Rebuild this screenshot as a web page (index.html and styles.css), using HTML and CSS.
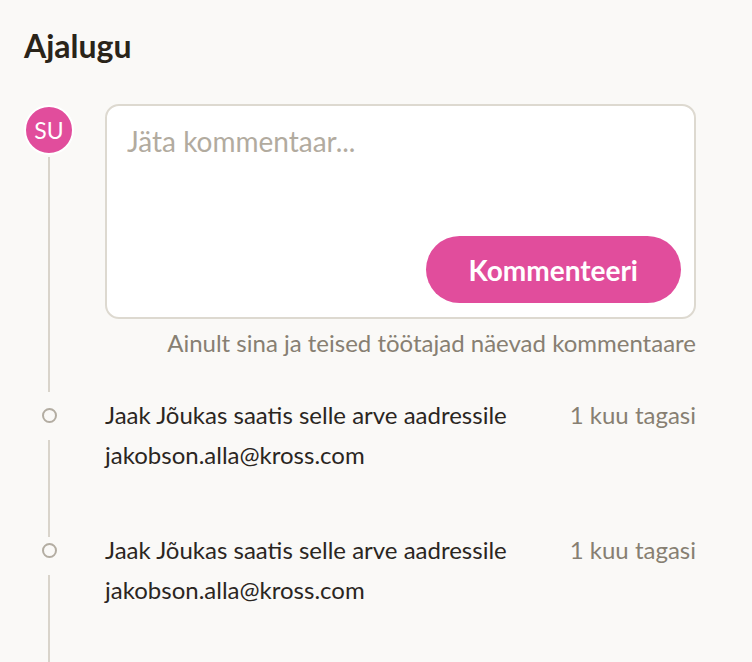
FILE: index.html
```html
<!DOCTYPE html>
<html lang="et">
<head>
    <meta charset="UTF-8">
    <meta name="viewport" content="width=device-width, initial-scale=1.0">
    <title>Ajalugu</title>
    <link rel="stylesheet" href="styles.css">
</head>
<body>
    <section class="history">
        <h2 class="history-title">Ajalugu</h2>

        <div class="timeline">
            <div class="row comment-row">
                <div class="rail">
                    <div class="avatar">SU</div>
                    <div class="rail-line rail-line-top"></div>
                </div>
                <div class="comment-col">
                    <div class="comment-box">
                        <textarea class="comment-input" placeholder="Jäta kommentaar..."></textarea>
                        <div class="comment-actions">
                            <button class="btn-comment">Kommenteeri</button>
                        </div>
                    </div>
                    <p class="comment-hint">Ainult sina ja teised töötajad näevad kommentaare</p>
                </div>
            </div>

            <div class="row event">
                <div class="rail">
                    <div class="dot"></div>
                    <div class="rail-line"></div>
                </div>
                <div class="event-body">
                    <p class="event-text">Jaak Jõukas saatis selle arve aadressile jakobson.alla@kross.com</p>
                    <span class="event-time">1 kuu tagasi</span>
                </div>
            </div>

            <div class="row event">
                <div class="rail">
                    <div class="dot"></div>
                    <div class="rail-line"></div>
                </div>
                <div class="event-body">
                    <p class="event-text">Jaak Jõukas saatis selle arve aadressile jakobson.alla@kross.com</p>
                    <span class="event-time">1 kuu tagasi</span>
                </div>
            </div>
        </div>
    </section>
</body>
</html>
```

FILE: styles.css
```css
/* Reset */
* {
    margin: 0;
    padding: 0;
    box-sizing: border-box;
}

body {
    font-family: 'Lato', 'Open Sans', sans-serif;
    background-color: #faf9f7;
    color: #2b261f;
    overflow: hidden;
}

.history {
    padding: 27px 56px 0 24px;
}

.history-title {
    font-size: 32px;
    line-height: 38px;
    font-weight: 700;
    color: #2a2419;
    margin-bottom: 39px;
}

/* Timeline rows */
.row {
    display: grid;
    grid-template-columns: 50px 1fr;
    column-gap: 31px;
}

.rail {
    display: flex;
    flex-direction: column;
    align-items: center;
}

.rail-line {
    flex: 1;
    width: 2px;
    background-color: #d9d4cb;
    margin-top: 17px;
    margin-bottom: -7px;
}

.rail-line-top {
    margin-top: 2px;
    margin-bottom: 3px;
}

.avatar {
    width: 50px;
    height: 50px;
    margin-top: 1px;
    border-radius: 50%;
    border: 2px solid #fff;
    background-color: #e14d9c;
    color: #fff;
    font-size: 23px;
    display: flex;
    align-items: center;
    justify-content: center;
}

/* Comment form */
.comment-col {
    padding-bottom: 38px;
}

.comment-box {
    height: 215px;
    background-color: #fff;
    border: 2px solid #ddd9d0;
    border-radius: 14px;
    display: flex;
    flex-direction: column;
    padding: 0 13px 14px 20px;
}

.comment-input {
    flex: 1;
    border: none;
    outline: none;
    resize: none;
    background: transparent;
    font-family: inherit;
    font-size: 28px;
    color: #2b261f;
    padding-top: 18px;
}

.comment-input::placeholder {
    color: #b2ab9f;
}

.comment-actions {
    display: flex;
    justify-content: flex-end;
}

.btn-comment {
    height: 67px;
    padding: 0 43px;
    border: none;
    border-radius: 34px;
    background-color: #e14d9c;
    color: #fff;
    font-family: inherit;
    font-size: 28px;
    font-weight: 700;
    cursor: pointer;
}

.comment-hint {
    margin-top: 10px;
    text-align: right;
    font-size: 24px;
    line-height: 28px;
    color: #877f72;
}

/* Events */
.dot {
    width: 15px;
    height: 15px;
    margin-top: 13px;
    border-radius: 50%;
    border: 2px solid #b3ada2;
}

.event-body {
    display: flex;
    justify-content: space-between;
    align-items: flex-start;
    gap: 30px;
    padding-bottom: 55px;
}

.event-text {
    max-width: 440px;
    font-size: 24px;
    line-height: 40px;
}

.event-time {
    font-size: 24px;
    line-height: 40px;
    color: #877f72;
    white-space: nowrap;
}
```
